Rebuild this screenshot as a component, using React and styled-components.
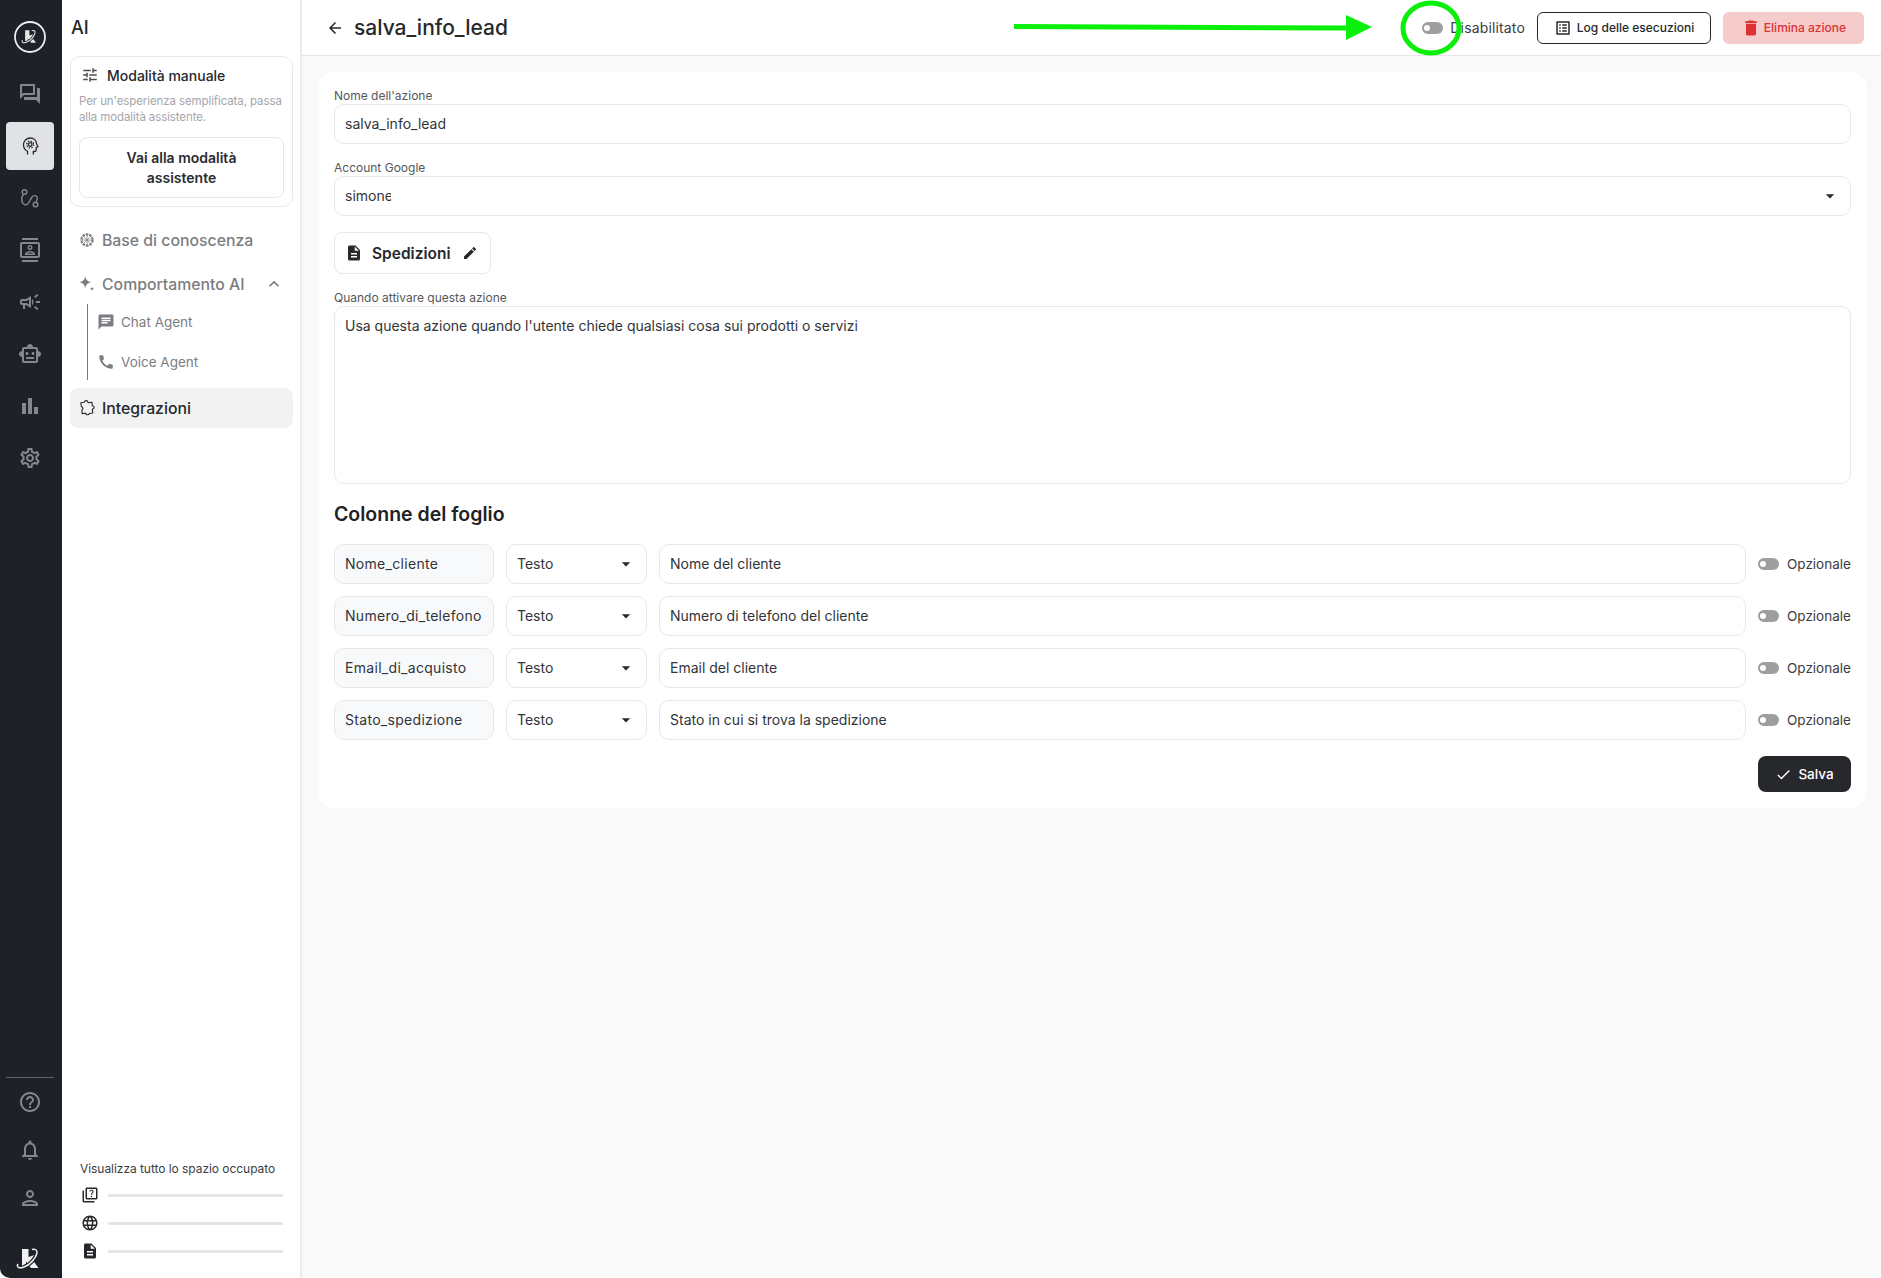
import React from 'react';
import styled, { createGlobalStyle } from 'styled-components';
import {
  MdArrowBack, MdArrowDropDown, MdBarChart, MdCall, MdChat, MdCheck, MdDelete, MdDescription, MdEdit,
  MdExpandLess, MdLanguage, MdOutlineCampaign, MdOutlineContacts, MdOutlineHelpOutline, MdOutlineListAlt,
  MdOutlineNotifications, MdOutlinePerson, MdOutlineQuestionAnswer, MdOutlineQuiz,
  MdOutlineSettings, MdOutlineSmartToy, MdOutlineTune,
} from 'react-icons/md';

const GlobalStyle = createGlobalStyle`
  html, body { margin: 0; padding: 0; height: 100%; }
  body { font-family: Inter, "Liberation Sans", sans-serif; background: #f9f9f9; color: #26282c; }
  * { box-sizing: border-box; }
`;

const Shell = styled.div`
  display: flex;
  height: 1278px;
  position: relative;
  overflow: hidden;
  background: #f9f9f9;
`;

const Rail = styled.nav`
  width: 62px;
  flex: none;
  background: #1e2127;
  display: flex;
  flex-direction: column;
  align-items: center;
  padding: 21px 2px 0 0;
  border-bottom-left-radius: 10px;
`;

const RailItem = styled.div`
  width: 48px;
  height: 48px;
  display: flex;
  align-items: center;
  justify-content: center;
  border-radius: 4px;
  color: ${p => p.$active ? '#26282c' : '#84878c'};
  background: ${p => p.$active ? '#e1e2e6' : 'transparent'};
  font-size: 24px;
  margin-bottom: ${p => p.$flat ? 0 : 4}px;
`;

const RailTop = styled.div`
  margin-top: 17px;
  display: flex;
  flex-direction: column;
`;

const RailBottom = styled.div`
  margin-top: auto;
  display: flex;
  flex-direction: column;
  align-items: center;
  padding-bottom: 4px;
`;

const RailDivider = styled.div`
  width: 48px;
  height: 1px;
  background: #5f6267;
`;

const FootLogo = styled.div`
  margin-top: 22px;
  display: flex;
`;

const Sidebar = styled.aside`
  width: 240px;
  flex: none;
  background: #fff;
  border-right: 2px solid #ececec;
  padding: 0 7px 13px 8px;
  display: flex;
  flex-direction: column;
`;

const SideTitle = styled.div`
  height: 56px;
  padding: 0 1px 0;
  font-size: 18px;
  font-weight: 500;
  line-height: 56px;
`;

const ModeCard = styled.div`
  border: 1px solid #e9e9e9;
  border-radius: 10px;
  padding: 8px;
  height: 151px;
  display: flex;
  flex-direction: column;
`;

const ModeHead = styled.div`
  display: flex;
  align-items: center;
  gap: 8px;
  font-size: 14px;
  font-weight: 450;
  color: #26282c;
  height: 20px;
  margin-left: 2px;
  svg { font-size: 18px; color: #4a4c50; }
`;

const ModeText = styled.p`
  margin: 8px 0 12px;
  font-size: 11.5px;
  line-height: 16px;
  color: #a4a6aa;
  letter-spacing: -0.1px;
`;

const ModeButton = styled.div`
  height: 61px;
  border: 1px solid #e6e6e6;
  border-radius: 8px;
  display: flex;
  align-items: center;
  justify-content: center;
  text-align: center;
  font-size: 14px;
  line-height: 20px;
  font-weight: 600;
  color: #2a2c30;
  padding: 0 30px;
`;

const NavItem = styled.div`
  height: 40px;
  display: flex;
  align-items: center;
  gap: 7px;
  padding: 0 9px;
  border-radius: 8px;
  font-size: 15.8px;
  font-weight: 500;
  color: ${p => p.$active ? '#26282c' : '#7b7d81'};
  background: ${p => p.$active ? '#f2f2f2' : 'transparent'};
  margin-top: ${p => p.$mt || 0}px;
  svg { flex: none; }
`;

const Chevron = styled.span`
  margin-left: auto;
  display: flex;
  color: #77797d;
  svg { font-size: 20px; }
`;

const SubList = styled.div`
  margin-left: 17px;
  border-left: 1px solid #77797d;
  height: 76px;
  display: flex;
  flex-direction: column;
  justify-content: center;
`;

const SubItem = styled.div`
  height: 40px;
  flex: none;
  padding-left: 9px;
  display: flex;
  align-items: center;
  gap: 6px;
  font-size: 13.5px;
  color: #7b7d81;
  svg { font-size: 18px; }
`;

const Usage = styled.div`
  margin-top: auto;
  padding: 0 10px 0 10px;
`;

const UsageTitle = styled.div`
  font-size: 12px;
  line-height: 16px;
  color: #3c3e42;
  margin-bottom: 4px;
  letter-spacing: -0.05px;
`;

const UsageRow = styled.div`
  height: 28px;
  display: flex;
  align-items: center;
  gap: 9px;
  padding-left: 1px;
  svg { font-size: 18px; color: #26282c; flex: none; }
`;

const UsageBar = styled.div`
  flex: 1;
  height: 3px;
  border-radius: 2px;
  background: #e5e5e5;
`;

const Main = styled.main`
  flex: 1;
  min-width: 0;
  display: flex;
  flex-direction: column;
`;

const Header = styled.header`
  height: 56px;
  flex: none;
  background: #fff;
  border-bottom: 1px solid #e6e6e6;
  display: flex;
  align-items: center;
  padding: 0 17px 0 24px;
`;

const BackIcon = styled.span`
  display: flex;
  font-size: 18px;
  color: #26282c;
  margin-right: 10px;
`;

const PageTitle = styled.h1`
  margin: 0;
  font-size: 21px;
  font-weight: 500;
  color: #26282c;
`;

const HeaderActions = styled.div`
  margin-left: auto;
  display: flex;
  align-items: center;
`;

const Toggle = styled.span`
  display: block;
  position: relative;
  width: 21px;
  height: 12px;
  border-radius: 6px;
  background: #9e9e9e;
  flex: none;
  &::after {
    content: '';
    position: absolute;
    left: 2px;
    top: 3px;
    width: 6px;
    height: 6px;
    border-radius: 50%;
    background: #fff;
  }
`;

const ToggleRow = styled.div`
  display: flex;
  align-items: center;
  gap: 7px;
  font-size: 14px;
  letter-spacing: 0.15px;
  color: #3a3c40;
`;

const LogButton = styled.button`
  height: 32px;
  width: 174px;
  margin-left: 12px;
  background: #fff;
  border: 1px solid #26282c;
  border-radius: 6px;
  display: flex;
  align-items: center;
  justify-content: center;
  gap: 5px;
  font: 500 12px Inter, sans-serif;
  color: #26282c;
  padding: 0;
  svg { font-size: 18px; }
`;

const DeleteButton = styled.button`
  height: 32px;
  width: 141px;
  margin-left: 12px;
  background: #f5cbcb;
  border: 0;
  border-radius: 6px;
  display: flex;
  align-items: center;
  justify-content: center;
  gap: 3px;
  font: 500 12px Inter, sans-serif;
  color: #dc3232;
  padding: 0;
  svg { font-size: 20px; }
`;

const Content = styled.div`
  padding: 16px 14px 0 16px;
`;

const Card = styled.section`
  background: #fff;
  border-radius: 16px;
  padding: 16px;
  display: flex;
  flex-direction: column;
  gap: 16px;
`;

const Field = styled.div`
  display: flex;
  flex-direction: column;
`;

const Label = styled.label`
  font-size: 12px;
  line-height: 16px;
  color: #55575b;
`;

const Box = styled.div`
  height: 40px;
  flex: none;
  border: 1px solid #e8e8e8;
  border-radius: 10px;
  background: #fff;
  display: flex;
  align-items: center;
  justify-content: ${p => p.$between ? 'space-between' : 'flex-start'};
  padding: 0 10px;
  font-size: 14px;
  line-height: 20px;
  color: #323438;
  white-space: nowrap;
`;

const TextArea = styled(Box)`
  height: 178px;
  align-items: flex-start;
  padding: 9px 10px;
`;

const NameCell = styled(Box)`
  width: 160px;
  background: #f8f9fb;
  letter-spacing: 0.3px;
`;

const TypeCell = styled(Box)`
  width: 141px;
`;

const DescCell = styled(Box)`
  flex: 1;
`;

const Clipped = styled.span`
  display: block;
  width: 46px;
  overflow: hidden;
`;

const Caret = styled.span`
  display: flex;
  color: #26282c;
  font-size: 20px;
`;

const SheetChip = styled.div`
  width: 157px;
  height: 42px;
  border: 1px solid #e8e8e8;
  border-radius: 8px;
  display: flex;
  align-items: center;
  padding: 0 10px;
  font-size: 15.5px;
  font-weight: 600;
  color: #26282c;
  svg { flex: none; }
  span { margin: 0 12px 0 9px; }
`;

const SectionTitle = styled.h2`
  margin: 0;
  height: 28px;
  line-height: 28px;
  font-size: 19.5px;
  font-weight: 600;
  color: #1f2125;
`;

const Rows = styled.div`
  display: flex;
  flex-direction: column;
  gap: 12px;
`;

const Row = styled.div`
  display: flex;
  align-items: center;
  gap: 12px;
`;

const OptionalCell = styled.div`
  width: 93px;
  flex: none;
  display: flex;
  align-items: center;
  gap: 8px;
  font-size: 13.5px;
  color: #3a3c40;
`;

const Actions = styled.div`
  display: flex;
  justify-content: flex-end;
`;

const SaveButton = styled.button`
  width: 93px;
  height: 36px;
  background: #26282c;
  color: #fff;
  border: 0;
  border-radius: 8px;
  display: flex;
  align-items: center;
  justify-content: center;
  gap: 6px;
  font: 500 13.5px Inter, sans-serif;
  padding: 0;
  svg { font-size: 17px; }
`;

const AnnotationArrow = styled.svg`
  position: absolute;
  left: 1000px;
  top: 0;
  pointer-events: none;
`;

const LogoMark = ({ size = 30 }) => (
  <svg width={size} height={size} viewBox="0 0 30 30" fill="none">
    <path d="M7 5h6.500v8l6-2-2.500 4 6.500 9h-7.500l-5-6.500v6.500H7z" fill="#f0f0f0" />
    <path d="M3 20c-2 3 1 5 6 3c6-2 12-9 13-14c.5-3-2-4.500-5-3.500" stroke="#1e2127" strokeWidth="4" />
    <path d="M3 20c-2 3 1 5 6 3c6-2 12-9 13-14c.5-3-2-4.500-5-3.500" stroke="#f0f0f0" strokeWidth="1.500" />
  </svg>
);

const RingLogo = () => (
  <svg width="32" height="32" viewBox="0 0 32 32" fill="none">
    <circle cx="16" cy="16" r="15" stroke="#eceded" strokeWidth="1.800" />
    <g transform="translate(6.500 6) scale(.66)">
      <path d="M7 5h6.500v8l6-2-2.500 4 6.500 9h-7.500l-5-6.500v6.500H7z" fill="#e6e6e6" />
      <path d="M3 20c-2 3 1 5 6 3c6-2 12-9 13-14c.5-3-2-4.500-5-3.500" stroke="#1e2127" strokeWidth="4" />
      <path d="M3 20c-2 3 1 5 6 3c6-2 12-9 13-14c.5-3-2-4.500-5-3.500" stroke="#e6e6e6" strokeWidth="1.600" />
    </g>
  </svg>
);

const PsychologyIcon = () => (
  <svg width="24" height="24" viewBox="0 0 24 24" fill="none" stroke="currentColor" strokeWidth="1.300" strokeLinejoin="round">
    <path d="M9.500 20.500v-3.200c-2.800-1.500-4-3.600-4-6.300C5.500 7 8.500 4 12.300 4c3.500 0 6.200 2.500 6.200 5.500l1.500 3.200-1.800.8v2.600c0 .9-.7 1.400-1.500 1.400h-1.400v3" />
    <circle cx="12.200" cy="10.500" r="1.800" />
    <circle cx="12.200" cy="10.500" r="3.400" strokeDasharray="1.400 1.270" strokeWidth="1.300" />
  </svg>
);

const RouteIcon = () => (
  <svg width="24" height="24" viewBox="0 0 24 24" fill="none" stroke="currentColor" strokeWidth="1.400">
    <circle cx="6.500" cy="6" r="2.300" />
    <circle cx="17.500" cy="18.500" r="2.300" />
    <path d="M5.500 8.200C3 11 3 17.500 6.800 18.700c4 1 4.700-4.600 7-7.400 1.700-2.200 4.400-2 5.200-.4.700 1.500.2 3-.8 5" />
  </svg>
);

const BrainIcon = () => (
  <svg width="16" height="16" viewBox="0 0 16 16" fill="none" stroke="#7b7d81">
    <circle cx="8" cy="8" r="5.600" strokeWidth="2.200" strokeDasharray="2.600 .9" />
    <path d="M2.500 8h11M8 2.500v11M4.500 4.500l7 7M11.500 4.500l-7 7" strokeWidth=".8" />
  </svg>
);

const SparkleIcon = () => (
  <svg width="16" height="16" viewBox="0 0 16 16" fill="#7b7d81">
    <path d="M6.300 0c.6 3.900 2 5.300 5.800 6.200-3.800.9-5.200 2.300-5.800 6.200-.6-3.900-2-5.300-5.800-6.200C4.300 5.300 5.700 3.900 6.300 0z" />
    <path d="M13 10.500c.2 1.400.8 2 2.300 2.300-1.500.3-2.100.9-2.300 2.300-.2-1.400-.8-2-2.300-2.300 1.500-.3 2.100-.9 2.300-2.300z" />
  </svg>
);

const PuzzleIcon = () => (
  <svg width="16" height="16" viewBox="0 0 16 16" fill="none" stroke="#26282c" strokeWidth="1.100" strokeLinejoin="round">
    <path d="M1.800 2.700l3.600-.5c.2-2 3-2.200 3.500-.2l.2.700 3.900-.4.300 3.500c2-.2 2.700 2.700.4 3.300l-.4.200.5 3.700-3.600.5c-.5 2-3 1.500-3.400 0l-.1-.3-3.600.4-.2-3.500c1.400-.7 1.200-2.800-.2-3.400l-.4-.1z" />
  </svg>
);

const railTop = [MdOutlineQuestionAnswer, PsychologyIcon, RouteIcon, MdOutlineContacts, MdOutlineCampaign, MdOutlineSmartToy, MdBarChart, MdOutlineSettings];

const columns = [
  { name: 'Nome_cliente', desc: 'Nome del cliente' },
  { name: 'Numero_di_telefono', desc: 'Numero di telefono del cliente' },
  { name: 'Email_di_acquisto', desc: 'Email del cliente' },
  { name: 'Stato_spedizione', desc: 'Stato in cui si trova la spedizione' },
];

export default function App() {
  return (
    <Shell>
      <GlobalStyle />
      <Rail>
        <RingLogo />
        <RailTop>
          {railTop.map((Icon, i) => (
            <RailItem key={i} $active={i === 1}><Icon /></RailItem>
          ))}
        </RailTop>
        <RailBottom>
          <RailDivider />
          <RailItem $flat><MdOutlineHelpOutline /></RailItem>
          <RailItem $flat><MdOutlineNotifications /></RailItem>
          <RailItem $flat><MdOutlinePerson /></RailItem>
          <FootLogo><LogoMark /></FootLogo>
        </RailBottom>
      </Rail>

      <Sidebar>
        <SideTitle>AI</SideTitle>
        <ModeCard>
          <ModeHead><MdOutlineTune />Modalità manuale</ModeHead>
          <ModeText>Per un'esperienza semplificata, passa alla modalità assistente.</ModeText>
          <ModeButton>Vai alla modalità assistente</ModeButton>
        </ModeCard>
        <NavItem $mt={13}><BrainIcon />Base di conoscenza</NavItem>
        <NavItem $mt={4}>
          <SparkleIcon />Comportamento AI
          <Chevron><MdExpandLess /></Chevron>
        </NavItem>
        <SubList>
          <SubItem><MdChat />Chat Agent</SubItem>
          <SubItem><MdCall />Voice Agent</SubItem>
        </SubList>
        <NavItem $active $mt={8}><PuzzleIcon />Integrazioni</NavItem>
        <Usage>
          <UsageTitle>Visualizza tutto lo spazio occupato</UsageTitle>
          <UsageRow><MdOutlineQuiz /><UsageBar /></UsageRow>
          <UsageRow><MdLanguage /><UsageBar /></UsageRow>
          <UsageRow><MdDescription /><UsageBar /></UsageRow>
        </Usage>
      </Sidebar>

      <Main>
        <Header>
          <BackIcon><MdArrowBack /></BackIcon>
          <PageTitle>salva_info_lead</PageTitle>
          <HeaderActions>
            <ToggleRow><Toggle />Disabilitato</ToggleRow>
            <LogButton><MdOutlineListAlt />Log delle esecuzioni</LogButton>
            <DeleteButton><MdDelete />Elimina azione</DeleteButton>
          </HeaderActions>
        </Header>
        <Content>
          <Card>
            <Field>
              <Label>Nome dell'azione</Label>
              <Box>salva_info_lead</Box>
            </Field>
            <Field>
              <Label>Account Google</Label>
              <Box $between><Clipped>simone</Clipped><Caret><MdArrowDropDown /></Caret></Box>
            </Field>
            <SheetChip><MdDescription size={18} /><span>Spedizioni</span><MdEdit size={16} /></SheetChip>
            <Field>
              <Label>Quando attivare questa azione</Label>
              <TextArea>Usa questa azione quando l'utente chiede qualsiasi cosa sui prodotti o servizi</TextArea>
            </Field>
            <SectionTitle>Colonne del foglio</SectionTitle>
            <Rows>
              {columns.map(c => (
                <Row key={c.name}>
                  <NameCell>{c.name}</NameCell>
                  <TypeCell $between>Testo<Caret><MdArrowDropDown /></Caret></TypeCell>
                  <DescCell>{c.desc}</DescCell>
                  <OptionalCell><Toggle />Opzionale</OptionalCell>
                </Row>
              ))}
            </Rows>
            <Actions>
              <SaveButton><MdCheck />Salva</SaveButton>
            </Actions>
          </Card>
        </Content>
      </Main>

      <AnnotationArrow width="480" height="60" viewBox="0 0 480 60" fill="none">
        <path d="M14 26.500 L348 28" stroke="#0bf00b" strokeWidth="5" />
        <path d="M346 15 L372 27 L346 40z" fill="#0bf00b" />
        <ellipse cx="431" cy="28" rx="28" ry="25" stroke="#0bf00b" strokeWidth="5" />
      </AnnotationArrow>
    </Shell>
  );
}
